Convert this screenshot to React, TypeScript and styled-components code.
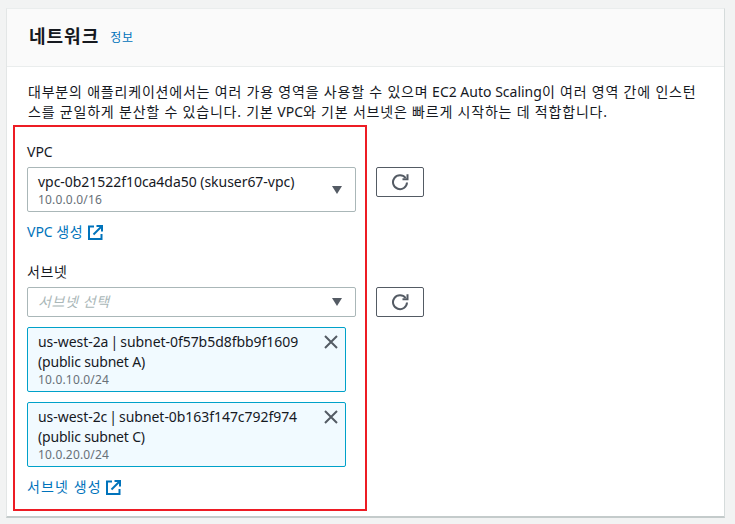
import React from "react";
import styled, { createGlobalStyle } from "styled-components";

const Global = createGlobalStyle`
  html, body { margin: 0; padding: 0; background: #f2f3f3; }
  body { font-family: "Noto Sans", "Noto Sans CJK KR", sans-serif; color: #16191f; }
  * { box-sizing: border-box; }
`;

const Page = styled.div`
  width: 735px;
  height: 524px;
  padding: 8px 10px 0 6px;
  overflow: hidden;
`;

const Card = styled.section`
  position: relative;
  width: 719px;
  height: 510px;
  background: #fff;
  border-left: 1px solid #e3e6e6;
  border-right: 1px solid #d5dbdb;
  border-bottom: 2px solid #c4cbcb;
  border-top: 1px solid #eaeded;
`;

const Header = styled.header`
  height: 58px;
  padding: 0 0 4px 22px;
  background: #fafafa;
  border-bottom: 1px solid #eaeded;
  display: flex;
  align-items: center;
  gap: 11px;
`;

const Title = styled.h2`
  margin: 0;
  font-size: 18px;
  line-height: 24px;
  font-weight: 700;
  letter-spacing: 1px;
`;

const Info = styled.a`
  font-size: 12px;
  line-height: 16px;
  color: #0073bb;
  margin-top: 4px;
  letter-spacing: 0.8px;
`;

const Body = styled.div`
  padding: 15px 20px 0 20px;
`;

const Description = styled.p`
  margin: 0 0 20px 1px;
  font-size: 14px;
  line-height: 20px;
  width: 690px;
  white-space: nowrap;
`;

const Korean = styled.span<{ $spacing?: number }>`
  letter-spacing: ${(p) => p.$spacing ?? 0.8}px;
`;

const Field = styled.div`
  display: flex;
  flex-direction: column;
  margin-bottom: 20px;
`;

const Label = styled.label`
  font-size: 14px;
  line-height: 20px;
  margin-bottom: 5px;
`;

const Row = styled.div`
  display: flex;
  align-items: flex-start;
  gap: 20px;
`;

const Select = styled.div<{ $tall?: boolean }>`
  width: 329px;
  height: ${(p) => (p.$tall ? 45 : 30)}px;
  border: 1px solid #aab7b8;
  border-radius: 2px;
  background: #fff;
  padding: ${(p) => (p.$tall ? "4px" : "3px")} 10px 0;
  display: flex;
  align-items: flex-start;
  justify-content: space-between;
`;

const SelectText = styled.div`
  display: flex;
  flex-direction: column;
`;

const Primary = styled.span`
  font-size: 14px;
  line-height: 20px;
  white-space: nowrap;
  letter-spacing: -0.04px;
`;

const ChipName = styled(Primary)`
  letter-spacing: -0.05px;
  word-spacing: -1.5px;
`;

const ChipNote = styled(Primary)`
  letter-spacing: -0.18px;
`;

const Placeholder = styled.span`
  font-size: 14px;
  line-height: 22px;
  font-style: italic;
  color: #aab7b8;
  letter-spacing: 0.6px;
`;

const Secondary = styled.span`
  font-size: 12px;
  line-height: 15px;
  color: #687078;
  letter-spacing: 0.17px;
`;

const Caret = styled.svg<{ $tall?: boolean }>`
  width: 10px;
  height: 8px;
  margin-top: ${(p) => (p.$tall ? 14 : 7)}px;
  margin-right: 3px;
  flex: none;
  fill: #545b64;
`;

const RefreshButton = styled.button`
  width: 48px;
  height: 30px;
  border: 1px solid #545b64;
  border-radius: 2px;
  background: #fff;
  padding: 0;
  display: flex;
  align-items: center;
  justify-content: center;
  color: #545b64;
`;

const ExternalLink = styled.a<{ $gap?: number }>`
  display: flex;
  align-items: center;
  gap: ${(p) => p.$gap ?? 5}px;
  margin-top: 10px;
  font-size: 14px;
  line-height: 20px;
  color: #0073bb;
`;

const ChipList = styled.div`
  display: flex;
  flex-direction: column;
  gap: 10px;
  margin-top: 10px;
`;

const Chip = styled.div`
  width: 319px;
  height: 65px;
  padding: 4px 10px 0;
  background: #f1faff;
  border: 1px solid #00a1c9;
  border-radius: 2px;
  display: flex;
  justify-content: space-between;
  align-items: flex-start;
`;

const ChipText = styled.div`
  display: flex;
  flex-direction: column;
`;

const Close = styled.svg`
  width: 16px;
  height: 16px;
  margin: 2px -4px 0 0;
  flex: none;
  stroke: #545b64;
  stroke-width: 2;
  fill: none;
`;

const Annotation = styled.div`
  position: absolute;
  left: 6px;
  top: 116px;
  width: 354px;
  height: 386px;
  border: 2px solid #ed1c24;
  pointer-events: none;
`;

const ArrowDown = ({ tall }: { tall?: boolean }) => (
  <Caret $tall={tall} viewBox="0 0 10 8">
    <path d="M0 0h10L5 8z" />
  </Caret>
);

const Refresh = () => (
  <svg width="18" height="18" viewBox="0 0 18 18" fill="none" stroke="currentColor" strokeWidth="2">
    <path d="M14.6 5A7 7 0 1 0 16 9.5" />
    <path d="M16.5 1.2v5h-5" strokeLinejoin="miter" />
  </svg>
);

const External = () => (
  <svg width="15" height="15" viewBox="0 0 15 15" fill="none" stroke="#0073bb" strokeWidth="2">
    <path d="M6 1.500H1v12.500h12.500V9" />
    <path d="M5.500 9.500L13.500 1.500" />
    <path d="M8.500 1h5.500v5.500" />
  </svg>
);

const chips = [
  ["us-west-2a | subnet-0f57b5d8fbb9f1609", "(public subnet A)", "10.0.10.0/24"],
  ["us-west-2c | subnet-0b163f147c792f974", "(public subnet C)", "10.0.20.0/24"],
];

export default function App() {
  return (
    <Page>
      <Global />
      <Card>
        <Header>
          <Title>네트워크</Title>
          <Info>정보</Info>
        </Header>
        <Body>
          <Description>
            <Korean>대부분의 애플리케이션에서는 여러 가용 영역을 사용할 수 있으며</Korean> EC2 Auto Scaling
            <Korean>이 여러 영역 간에 인스턴</Korean>
            <br />
            <Korean>스를 균일하게 분산할 수 있습니다. 기본</Korean> VPC<Korean>와 기본 서브넷은 빠르게 시작하는 데 적합합니다.</Korean>
          </Description>
          <Field>
            <Label>VPC</Label>
            <Row>
              <Select $tall>
                <SelectText>
                  <Primary>vpc-0b21522f10ca4da50 (skuser67-vpc)</Primary>
                  <Secondary>10.0.0.0/16</Secondary>
                </SelectText>
                <ArrowDown tall />
              </Select>
              <RefreshButton aria-label="새로 고침">
                <Refresh />
              </RefreshButton>
            </Row>
            <ExternalLink>
              <span>
                VPC <Korean $spacing={0.5}>생성</Korean>
              </span>
              <External />
            </ExternalLink>
          </Field>
          <Field>
            <Label>
              <Korean $spacing={0.6}>서브넷</Korean>
            </Label>
            <Row>
              <Select>
                <Placeholder>서브넷 선택</Placeholder>
                <ArrowDown />
              </Select>
              <RefreshButton aria-label="새로 고침">
                <Refresh />
              </RefreshButton>
            </Row>
            <ChipList>
              {chips.map(([a, b, c]) => (
                <Chip key={a}>
                  <ChipText>
                    <ChipName>{a}</ChipName>
                    <ChipNote>{b}</ChipNote>
                    <Secondary>{c}</Secondary>
                  </ChipText>
                  <Close viewBox="0 0 16 16">
                    <path d="M2 2l12 12M14 2L2 14" />
                  </Close>
                </Chip>
              ))}
            </ChipList>
            <ExternalLink $gap={4}>
              <Korean $spacing={1.1}>서브넷 생성</Korean>
              <External />
            </ExternalLink>
          </Field>
        </Body>
        <Annotation />
      </Card>
    </Page>
  );
}
